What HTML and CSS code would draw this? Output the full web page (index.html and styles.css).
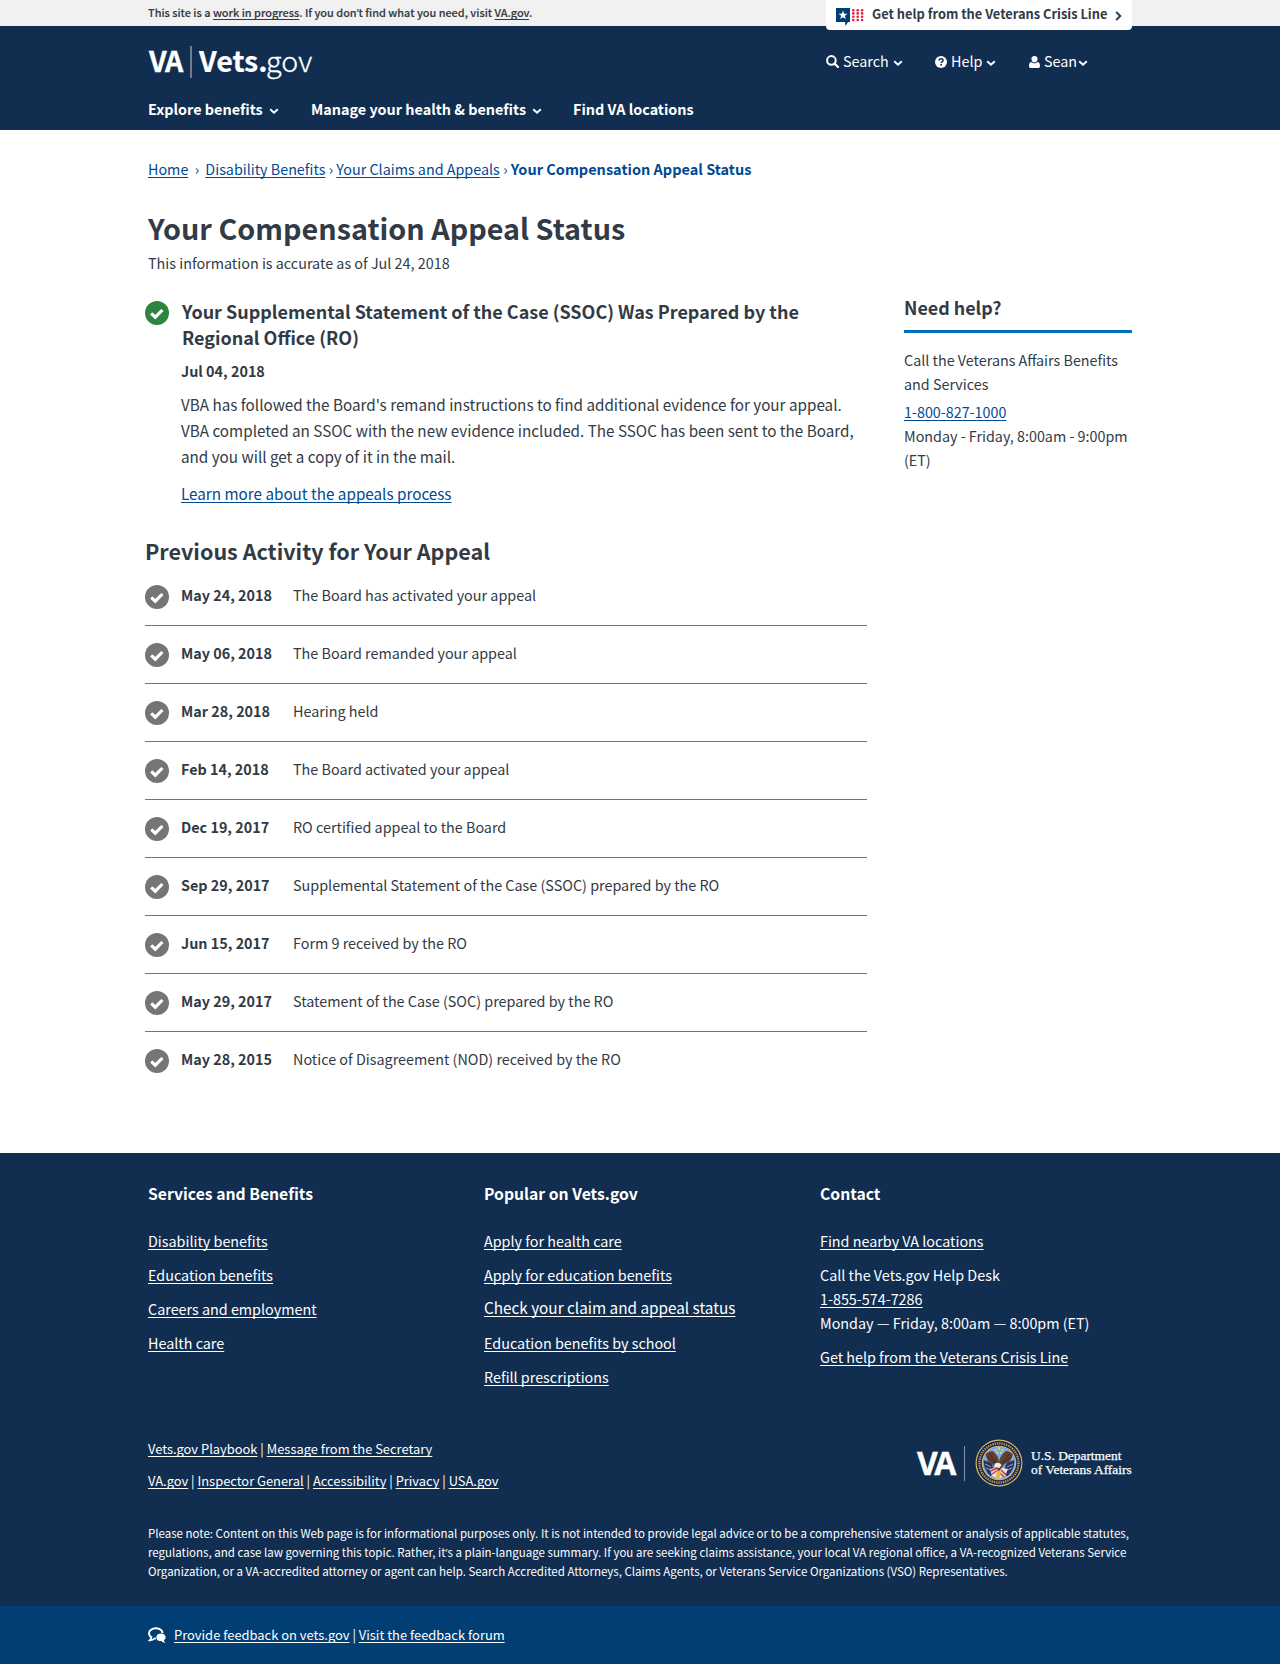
FILE: index.html
```html
<!DOCTYPE html>
<html lang="en">
<head>
<meta charset="utf-8">
<title>Your Compensation Appeal Status | Vets.gov</title>
<link rel="stylesheet" href="styles.css">
</head>
<body>
<svg class="defs" width="0" height="0" aria-hidden="true">
  <symbol id="chevron" viewBox="0 0 10 10"><path d="M1.200 3.200l3.800 3.600L8.800 3.200" fill="none" stroke="currentColor" stroke-width="1.900"/></symbol>
  <symbol id="check" viewBox="0 0 24 24"><circle cx="12" cy="12" r="12"/><path d="M6.200 12.300l4.100 3.900 7.100-7.200" fill="none" stroke="#fff" stroke-width="3.200"/></symbol>
</svg>

<div class="notice">
  <div class="wrap notice-row">
    <p class="notice-text">This site is a <a href="#">work in progress</a>. If you don<span class="apos">’</span>t find what you need, visit <a href="#">VA.gov</a>.</p>
    <a class="crisis" href="#">
      <svg class="crisis-icon" viewBox="0 0 28 18"><path d="M0 0h14v14h-2l-2.500 4-.5-4H0z" fill="#003e73"/><path d="M7 2.600l1.200 3.100 3.300.1-2.600 2 .9 3.200L7 9.200 4.200 11l.9-3.200-2.600-2 3.300-.1z" fill="#fff"/><g fill="#e31c3d"><circle cx="17.300" cy="2.200" r="1.300"/><circle cx="21.700" cy="2.200" r="1.300"/><circle cx="26.100" cy="2.200" r="1.300"/><circle cx="17.300" cy="5.400" r="1.300"/><circle cx="21.700" cy="5.400" r="1.300"/><circle cx="26.100" cy="5.400" r="1.300"/><circle cx="17.300" cy="8.700" r="1.300"/><circle cx="21.700" cy="8.700" r="1.300"/><circle cx="26.100" cy="8.700" r="1.300"/><circle cx="17.300" cy="12" r="1.300"/><circle cx="21.700" cy="12" r="1.300"/><circle cx="26.100" cy="12" r="1.300"/></g></svg>
      <span class="crisis-text">Get help from the Veterans Crisis Line</span>
      <svg class="crisis-arrow" viewBox="0 0 7 10"><path d="M1.200 1l4 4-4 4" fill="none" stroke="currentColor" stroke-width="2"/></svg>
    </a>
  </div>
</div>

<header class="header">
  <div class="wrap">
    <div class="brand-row">
      <a class="logo" href="#"><span class="logo-va">VA</span><span class="logo-rule"></span><span class="logo-vets">Vets.</span><span class="logo-gov">gov</span></a>
      <div class="tools">
        <a class="tool tool-search" href="#"><svg class="tool-icon" viewBox="0 0 13 13"><circle cx="5.400" cy="5.400" r="4.300" fill="none" stroke="#fff" stroke-width="2"/><path d="M8.500 8.500l3.500 3.500" stroke="#fff" stroke-width="2.300" stroke-linecap="round"/></svg><span>Search</span><svg class="chev"><use href="#chevron"/></svg></a>
        <a class="tool tool-help" href="#"><svg class="tool-icon" viewBox="0 0 12 12"><circle cx="6" cy="6" r="6" fill="#fff"/><path d="M4 4.600C4.100 3.300 5 2.800 6 2.800c1.200 0 2 .7 2 1.600C8 5.700 6.200 5.600 6.200 7" fill="none" stroke="#112e51" stroke-width="1.500"/><rect x="5.400" y="7.900" width="1.600" height="1.600" fill="#112e51"/></svg><span>Help</span><svg class="chev"><use href="#chevron"/></svg></a>
        <a class="tool tool-user" href="#"><svg class="tool-icon" viewBox="0 0 11 12"><path d="M5.500 0a3 3 0 0 1 3 3.200c0 1.700-1.300 3.300-3 3.300s-3-1.600-3-3.300a3 3 0 0 1 3-3.200zM2.300 6Q5.500 8.900 8.700 6C10.300 6.300 11 7.800 11 9.900c0 1.300-.8 2.100-2 2.100H2c-1.200 0-2-.8-2-2.100C0 7.800.7 6.300 2.300 6z" fill="#fff"/></svg><span>Sean</span><svg class="chev"><use href="#chevron"/></svg></a>
      </div>
    </div>
    <nav class="nav">
      <a class="nav-explore" href="#"><span>Explore benefits</span><svg class="chev"><use href="#chevron"/></svg></a>
      <a class="nav-manage" href="#"><span>Manage your health &amp; benefits</span><svg class="chev"><use href="#chevron"/></svg></a>
      <a class="nav-find" href="#">Find VA locations</a>
    </nav>
  </div>
</header>

<main class="wrap main">
  <nav class="crumbs">
    <a href="#">Home</a><span class="sep sep-wide">›</span><a href="#">Disability Benefits</a><span class="sep">›</span><a href="#">Your Claims and Appeals</a><span class="sep">›</span><strong>Your Compensation Appeal Status</strong>
  </nav>
  <h1 class="title">Your Compensation Appeal Status</h1>
  <p class="asof">This information is accurate as of Jul 24, 2018</p>

  <div class="columns">
    <div class="primary">
      <section class="status">
        <svg class="check check-done"><use href="#check"/></svg>
        <div class="status-body">
          <h2 class="status-title">Your Supplemental Statement of the Case (SSOC) Was Prepared by the<br>Regional Office (RO)</h2>
          <p class="status-date">Jul 04, 2018</p>
          <p class="status-text">VBA has followed the Board's remand instructions to find additional evidence for your appeal.<br>VBA completed an SSOC with the new evidence included. The SSOC has been sent to the Board,<br>and you will get a copy of it in the mail.</p>
          <a class="status-link" href="#">Learn more about the appeals process</a>
        </div>
      </section>
      <h2 class="activity-title">Previous Activity for Your Appeal</h2>
      <ul class="activity">
        <li><svg class="check"><use href="#check"/></svg><b>May 24, 2018</b><span>The Board has activated your appeal</span></li>
        <li><svg class="check"><use href="#check"/></svg><b>May 06, 2018</b><span>The Board remanded your appeal</span></li>
        <li><svg class="check"><use href="#check"/></svg><b>Mar 28, 2018</b><span>Hearing held</span></li>
        <li><svg class="check"><use href="#check"/></svg><b>Feb 14, 2018</b><span>The Board activated your appeal</span></li>
        <li><svg class="check"><use href="#check"/></svg><b>Dec 19, 2017</b><span>RO certified appeal to the Board</span></li>
        <li><svg class="check"><use href="#check"/></svg><b>Sep 29, 2017</b><span>Supplemental Statement of the Case (SSOC) prepared by the RO</span></li>
        <li><svg class="check"><use href="#check"/></svg><b>Jun 15, 2017</b><span>Form 9 received by the RO</span></li>
        <li><svg class="check"><use href="#check"/></svg><b>May 29, 2017</b><span>Statement of the Case (SOC) prepared by the RO</span></li>
        <li><svg class="check"><use href="#check"/></svg><b>May 28, 2015</b><span>Notice of Disagreement (NOD) received by the RO</span></li>
      </ul>
    </div>
    <aside class="help">
      <h2 class="help-title">Need help?</h2>
      <p class="help-text">Call the Veterans Affairs Benefits<br>and Services</p>
      <p class="help-phone"><a href="#">1-800-827-1000</a><br>Monday - Friday, 8:00am - 9:00pm<br>(ET)</p>
    </aside>
  </div>
</main>

<footer class="footer">
  <div class="wrap">
    <div class="links">
      <section>
        <h3>Services and Benefits</h3>
        <ul>
          <li><a href="#">Disability benefits</a></li>
          <li><a href="#">Education benefits</a></li>
          <li><a href="#">Careers and employment</a></li>
          <li><a href="#">Health care</a></li>
        </ul>
      </section>
      <section>
        <h3>Popular on Vets.gov</h3>
        <ul>
          <li><a href="#">Apply for health care</a></li>
          <li><a href="#">Apply for education benefits</a></li>
          <li class="larger"><a href="#">Check your claim and appeal status</a></li>
          <li><a href="#">Education benefits by school</a></li>
          <li><a href="#">Refill prescriptions</a></li>
        </ul>
      </section>
      <section>
        <h3>Contact</h3>
        <ul>
          <li><a href="#">Find nearby VA locations</a></li>
          <li>Call the Vets.gov Help Desk<br><a href="#">1-855-574-7286</a><br>Monday — Friday, 8:00am — 8:00pm (ET)</li>
          <li><a href="#">Get help from the Veterans Crisis Line</a></li>
        </ul>
      </section>
    </div>
    <div class="legal">
      <div class="legal-links">
        <p><a href="#">Vets.gov Playbook</a> | <a href="#">Message from the Secretary</a></p>
        <p><a href="#">VA.gov</a> | <a href="#">Inspector General</a> | <a href="#">Accessibility</a> | <a href="#">Privacy</a> | <a href="#">USA.gov</a></p>
      </div>
      <div class="dept">
        <span class="dept-va">VA</span>
        <span class="dept-rule"></span>
        <svg class="seal" viewBox="0 0 48 48">
          <circle cx="24" cy="24" r="23.500" fill="#d9b760"/><circle cx="24" cy="24" r="22.300" fill="#1d2548"/>
          <circle cx="24" cy="24" r="19.600" fill="none" stroke="#b5a46f" stroke-width="2.200" stroke-dasharray="1.300 1"/>
          <circle cx="24" cy="24" r="17.300" fill="#d9b760"/><circle cx="24" cy="24" r="16.400" fill="#79aede"/>
          <path d="M8.500 21l8 3 4 11-5 2Q8.500 31 8.500 21zM39.500 21l-8 3-4 11 5 2Q39.500 31 39.500 21z" fill="#2b3263"/>
          <path d="M10 25l6 3M11 29l5 2M38 25l-6 3M37 29l-5 2" stroke="#b9bdd6" stroke-width=".8"/>
          <path d="M15 30l9-2 9 2-3 7-6 3-7-3z" fill="#e7dede"/><path d="M16 32l6-3M17 35l6-4M26 31l5 5M25 34l4 4" stroke="#c43c43" stroke-width="1.500"/>
          <path d="M10.500 15.500q3-3.500 7-3.500 6 4 6.500 11 1-7 7-11 4 0 7 3.500l-3 7-5 2 -3 4-3 4-4-5-4-3-3-2z" fill="#65402c"/>
          <path d="M14 14l8 11M35 14l-8 11M12 17l8 7M37 17l-8 7" stroke="#3d2b25" stroke-width="1"/>
          <path d="M19.500 25q4-3 7 1l-2 3-5-1z" fill="#eee"/><path d="M22 31l4 2-2 8-3-1z" fill="#e4b83c"/>
          <g fill="#efd45a"><circle cx="24" cy="9.500" r="1.200"/><circle cx="20.500" cy="11" r="1"/><circle cx="27.500" cy="11" r="1"/><circle cx="22" cy="14" r="1"/><circle cx="26" cy="14" r="1"/></g>
        </svg>
        <span class="dept-name">U.S. Department<br>of Veterans Affairs</span>
      </div>
    </div>
    <p class="note">Please note: Content on this Web page is for informational purposes only. It is not intended to provide legal advice or to be a comprehensive statement or analysis of applicable statutes,<br>regulations, and case law governing this topic. Rather, it<span class="apos">’</span>s a plain-language summary. If you are seeking claims assistance, your local VA regional office, a VA-recognized Veterans Service<br>Organization, or a VA-accredited attorney or agent can help. Search Accredited Attorneys, Claims Agents, or Veterans Service Organizations (VSO) Representatives.</p>
  </div>
</footer>
<div class="feedback">
  <div class="wrap feedback-row">
    <svg class="feedback-icon" viewBox="0 0 18 16"><path d="M3.300 10.300C.3 8.300.3 4.700 3 2.700 6 .5 11 .8 13.300 3.200q1.200 1.300 1.300 2.800" fill="none" stroke="#fff" stroke-width="2"/><path d="M3.300 9.300q.5 2-1.600 4Q5 13.200 6.600 11.500h1.200" fill="none" stroke="#fff" stroke-width="1.800"/><path d="M13 6.600c2.700 0 4.600 1.600 4.600 3.700 0 1.200-.6 2.200-1.700 2.900.1 1 .6 1.700 1.600 2.400-1.700.2-3-.3-4-1.500-2.900.2-5.200-1.400-5.200-3.700 0-2.200 2-3.800 4.700-3.800z" fill="#fff"/></svg>
    <p><a href="#">Provide feedback on vets.gov</a> | <a href="#">Visit the feedback forum</a></p>
  </div>
</div>
</body>
</html>
```
FILE: styles.css
```css
* { box-sizing: border-box; }
body {
  margin: 0;
  background: #fff;
  color: #323a45;
  font: 14.37px/24px "Noto Sans CJK SC", "Noto Sans", sans-serif;
}
h1, h2, h3, p, ul { margin: 0; padding: 0; }
ul { list-style: none; }
svg { display: block; flex: none; }
a {
  color: inherit;
  text-decoration: underline 1px;
  text-underline-offset: 2px;
  text-decoration-skip-ink: none;
}
.defs { position: absolute; }
.wrap { width: 984px; margin: 0 auto; white-space: nowrap; }
.apos { font-family: "Open Sans", sans-serif; line-height: 1; }

.notice { height: 26px; background: #f1f1f1; }
.notice-row { display: flex; justify-content: space-between; align-items: flex-start; }
.notice-text { font-size: 10.9px; line-height: 24px; font-weight: 500; -webkit-text-stroke: .15px #323a45; }
.crisis {
  position: relative;
  display: flex;
  align-items: center;
  width: 306px;
  height: 30px;
  padding: 0 10px;
  background: #fff;
  border-radius: 0 0 4px 4px;
  font-size: 12.84px;
  font-weight: 700;
  line-height: 28px;
  text-decoration: none;
}
.crisis-icon { width: 28px; height: 18px; margin: 3px 8px 0 0; }
.crisis-text { width: 243px; margin-top: -2px; }
.crisis-arrow { width: 7px; height: 10px; margin-top: 2px; }

.header { height: 104px; background: #112e51; color: #fff; }
.header a { text-decoration: none; }
.brand-row { display: flex; height: 71px; align-items: flex-start; }
.logo { display: flex; width: 678px; padding-top: 16px; font-size: 28.6px; line-height: 36px; }
.logo-va { width: 42px; padding-left: 1px; font-weight: 700; letter-spacing: -1.2px; -webkit-text-stroke: .3px #fff; }
.logo-rule { width: 2px; height: 32px; margin: 4px 7px 0 0; background: #6c7c93; }
.logo-vets { width: 67px; font-weight: 700; -webkit-text-stroke: .2px #fff; }
.logo-gov { font-weight: 300; -webkit-text-stroke: .3px #fff; }
.tools { display: flex; padding-top: 23px; }
.tool { display: flex; align-items: center; }
.tool-search { width: 109px; }
.tool-help { width: 94px; }
.tool-icon { width: 13px; height: 13px; margin: 1px 4px 0 0; }
.tool-help .tool-icon { width: 12px; height: 12px; }
.tool-user .tool-icon { width: 11px; height: 12px; }
.chev { width: 10px; height: 10px; margin: 3px 0 0 4px; }
.tool-user .chev { margin-left: 1px; }
.nav { display: flex; font-size: 14.4px; font-weight: 700; }
.nav a { display: flex; align-items: center; }
.nav .chev { margin: 4px 0 0 6px; }
.nav-explore { width: 163px; }
.nav-manage { width: 262px; }

.main { height: 1023px; padding-top: 27px; }
.crumbs { display: flex; color: #004993; font-size: 14.34px; }
.crumbs strong { font-size: 14.5px; }
.sep { width: 11px; text-align: center; }
.sep-wide { width: 17px; }
.title { margin-top: 27px; font-size: 28.77px; line-height: 40px; }
.asof { margin-top: 3px; }
.columns { display: grid; grid-template-columns: 722px 228px; gap: 37px; margin: 19px 0 0 -3px; }
.primary { padding-top: 4px; }
.status { display: flex; gap: 12px; }
.check { width: 24px; height: 24px; fill: #757575; }
.check-done { margin-top: 3px; fill: #2e8540; }
.status-title { padding-left: 1px; font-size: 17.98px; line-height: 26px; }
.status-date { margin-top: 9px; font-weight: 700; }
.status-text { margin: 8px 0 11px; font-size: 15.24px; line-height: 26px; }
.status-link { display: block; font-size: 15.24px; line-height: 26px; color: #004993; }
.activity-title { margin-top: 30px; font-size: 21.55px; line-height: 30px; }
.activity { margin-top: 2px; }
.activity li { display: flex; height: 58px; padding-top: 15px; border-bottom: 1px solid #757575; }
.activity li:last-child { border-bottom: 0; }
.activity .check { margin: 2px 12px 0 0; }
.activity b { width: 112px; }
.help { font-size: 14.33px; }
.help-title { padding-bottom: 10px; border-bottom: 3px solid #0071bb; font-size: 17.9px; line-height: 26px; }
.help-text { margin: 15px 0 4px; }
.help a { color: #004993; }

.footer { height: 453px; padding-top: 29px; background: #112e51; color: #fff; font-size: 14.35px; }
.links { display: grid; grid-template-columns: 336px 336px 312px; height: 255px; align-items: start; }
.links h3 { margin-bottom: 23px; font-size: 15.73px; }
.links ul { display: grid; gap: 10px; }
.larger { height: 24px; font-size: 15.3px; line-height: 21px; }
.legal { display: flex; justify-content: space-between; height: 87px; font-size: 12.9px; }
.legal-links { display: grid; gap: 8px; align-content: start; }
.dept { display: flex; height: 52px; align-items: center; }
.dept-va { width: 47px; font: 700 32px/36px "Open Sans", sans-serif; letter-spacing: -3.5px; -webkit-text-stroke: .4px #fff; }
.dept-rule { width: 1px; height: 35px; background: #8896a8; }
.seal { width: 48px; height: 48px; margin: 0 8px 0 10px; }
.dept-name { width: 101px; font: 13.4px/14px "Liberation Serif", serif; -webkit-text-stroke: .25px #fff; }
.note { font-size: 11.51px; line-height: 19px; }
.feedback { height: 58px; padding-top: 17px; background: #003e73; color: #fff; font-size: 12.93px; }
.feedback-row { display: flex; }
.feedback-icon { width: 18px; height: 16px; margin: 4px 8px 0 0; }
```
